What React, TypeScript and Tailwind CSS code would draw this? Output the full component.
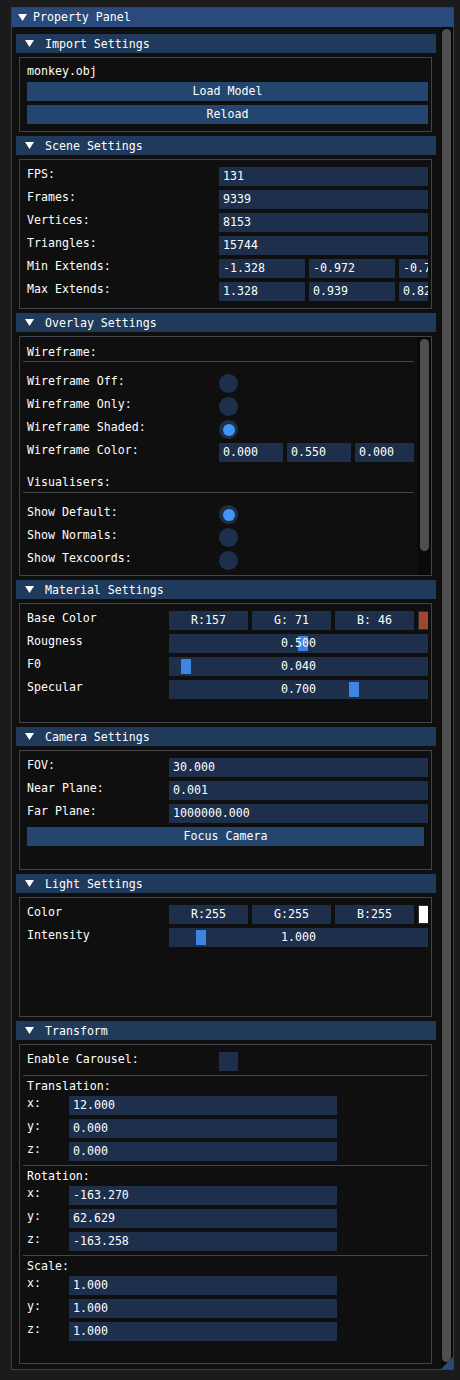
import React from "react";

// ImGui-like dark property panel

function Arrow({ className }: { className?: string }) {
  return (
    <svg width="9" height="7" viewBox="0 0 9 7" className={className}>
      <polygon points="0,0 9,0 4.5,7" fill="#ffffff" />
    </svg>
  );
}

function Header({ title }: { title: string }) {
  return (
    <div className="h-[19px] w-[420px] shrink-0 bg-[#1f3a5b] flex items-center">
      <Arrow className="ml-[9px] mr-[11px]" />
      <span className="pt-[2px]">{title}</span>
    </div>
  );
}

function Box({ className, children }: { className: string; children: React.ReactNode }) {
  return (
    <div className={"my-[4px] ml-[3px] w-[413px] shrink-0 border border-[#43434c] overflow-hidden " + className}>
      {children}
    </div>
  );
}

function Label({ className, children }: { className: string; children: React.ReactNode }) {
  return <div className={"shrink-0 pt-px whitespace-pre " + className}>{children}</div>;
}

function Field({ className, children }: { className?: string; children: React.ReactNode }) {
  return (
    <div className={"h-[19px] shrink-0 bg-[#1d2f4a] pl-[4px] pt-[3px] whitespace-pre overflow-hidden " + (className ?? "")}>
      {children}
    </div>
  );
}

function CenterField({ children }: { children: React.ReactNode }) {
  return (
    <div className="h-[19px] w-[79px] shrink-0 bg-[#1d2f4a] pt-[3px] text-center whitespace-pre">{children}</div>
  );
}

function Button({ className, children }: { className: string; children: React.ReactNode }) {
  return <div className={"h-[19px] shrink-0 bg-[#24456e] pt-[3px] text-center " + className}>{children}</div>;
}

function Radio({ on }: { on?: boolean }) {
  return (
    <div className="w-[19px] h-[19px] rounded-full bg-[#1d2f4a] flex items-center justify-center">
      {on && <div className="w-[12px] h-[12px] rounded-full bg-[#4296fa]" />}
    </div>
  );
}

function Slider({ grab, value }: { grab: string; value: string }) {
  return (
    <div className="relative h-[19px] w-[259px] bg-[#1d2f4a]">
      <div className={"absolute top-[2px] h-[15px] w-[10px] bg-[#3d85e0] " + grab} />
      <div className="relative pt-[3px] text-center">{value}</div>
    </div>
  );
}

function Sep({ className }: { className: string }) {
  return <div className={"h-px bg-[#43434c] -ml-[4px] " + className} />;
}

function Row({ className, children }: { className?: string; children: React.ReactNode }) {
  return <div className={"flex h-[19px] shrink-0 " + (className ?? "")}>{children}</div>;
}

export default function App() {
  return (
    <div className="min-h-[1380px] bg-[#1b1b1b] pt-[7px] pl-[11px] font-['DejaVu_Sans_Mono',monospace] text-[11.6px] leading-[13px] text-white">
      <div className="relative flex h-[1363px] w-[443px] flex-col border border-[#3d3d44] bg-[#0f0f0f]">
        <div className="flex h-[19px] shrink-0 items-center bg-[#294a7a]">
          <Arrow className="ml-[6px] mr-[6px]" />
          <span>Property Panel</span>
        </div>

        <div className="flex min-h-0 flex-1">
          <div className="flex w-[429px] flex-col overflow-hidden pl-[4px] pt-[7px]">
            {/* Import */}
            <Header title="Import Settings" />
            <Box className="h-[75px]">
              <div className="flex flex-col pl-[7px] pr-[3px] pt-[7px]">
                <div className="h-[13px]">monkey.obj</div>
                <Button className="mt-[4px]">Load Model</Button>
                <Button className="mt-[4px]">Reload</Button>
              </div>
            </Box>

            {/* Scene */}
            <Header title="Scene Settings" />
            <Box className="h-[150px]">
              <div className="flex flex-col gap-[4px] pl-[7px] pr-[3px] pt-[7px]">
                <Row>
                  <Label className="w-[192px]">FPS:</Label>
                  <Field className="w-[209px]">131</Field>
                </Row>
                <Row>
                  <Label className="w-[192px]">Frames:</Label>
                  <Field className="w-[209px]">9339</Field>
                </Row>
                <Row>
                  <Label className="w-[192px]">Vertices:</Label>
                  <Field className="w-[209px]">8153</Field>
                </Row>
                <Row>
                  <Label className="w-[192px]">Triangles:</Label>
                  <Field className="w-[209px]">15744</Field>
                </Row>
                <Row>
                  <Label className="w-[192px]">Min Extends:</Label>
                  <div className="flex w-[209px] gap-[4px] overflow-hidden">
                    <Field className="w-[86px]">-1.328</Field>
                    <Field className="w-[86px]">-0.972</Field>
                    <Field className="w-[86px]">-0.765</Field>
                  </div>
                </Row>
                <Row>
                  <Label className="w-[192px]">Max Extends:</Label>
                  <div className="flex w-[209px] gap-[4px] overflow-hidden">
                    <Field className="w-[86px]">1.328</Field>
                    <Field className="w-[86px]">0.939</Field>
                    <Field className="w-[86px]">0.828</Field>
                  </div>
                </Row>
              </div>
            </Box>

            {/* Overlay */}
            <Header title="Overlay Settings" />
            <Box className="h-[240px]">
              <div className="flex h-full">
                <div className="flex w-[397px] flex-col pl-[7px] pr-[3px] pt-[8px]">
                  <div className="h-[13px] pt-px">Wireframe:</div>
                  <Sep className="mt-[3px]" />
                  <div className="mt-[12px] flex flex-col gap-[4px]">
                    <Row>
                      <Label className="w-[192px]">Wireframe Off:</Label>
                      <Radio />
                    </Row>
                    <Row>
                      <Label className="w-[192px]">Wireframe Only:</Label>
                      <Radio />
                    </Row>
                    <Row>
                      <Label className="w-[192px]">Wireframe Shaded:</Label>
                      <Radio on />
                    </Row>
                    <Row>
                      <Label className="w-[192px]">Wireframe Color:</Label>
                      <div className="flex w-[195px] gap-[4px] overflow-hidden">
                        <Field className="w-[64px]">0.000</Field>
                        <Field className="w-[64px]">0.550</Field>
                        <Field className="w-[64px]">0.000</Field>
                      </div>
                    </Row>
                  </div>
                  <div className="mt-[13px] h-[13px] pt-px">Visualisers:</div>
                  <Sep className="mt-[4px]" />
                  <div className="mt-[12px] flex flex-col gap-[4px]">
                    <Row>
                      <Label className="w-[192px]">Show Default:</Label>
                      <Radio on />
                    </Row>
                    <Row>
                      <Label className="w-[192px]">Show Normals:</Label>
                      <Radio />
                    </Row>
                    <Row>
                      <Label className="w-[192px]">Show Texcoords:</Label>
                      <Radio />
                    </Row>
                  </div>
                </div>
                <div className="w-[14px] bg-[#0a0a0a] pt-[2px]">
                  <div className="ml-[3px] h-[212px] w-[9px] rounded-full bg-[#4f4f4f]" />
                </div>
              </div>
            </Box>

            {/* Material */}
            <Header title="Material Settings" />
            <Box className="h-[120px]">
              <div className="flex flex-col gap-[4px] pl-[7px] pr-[3px] pt-[7px]">
                <Row>
                  <Label className="w-[142px]">Base Color</Label>
                  <div className="flex w-[259px] gap-[4px] overflow-hidden">
                    <CenterField>R:157</CenterField>
                    <CenterField>G: 71</CenterField>
                    <CenterField>B: 46</CenterField>
                    <div className="h-[19px] w-[10px] shrink-0 border-y border-l border-[#2e2e33] bg-[#9d472e]" />
                  </div>
                </Row>
                <Row>
                  <Label className="w-[142px]">Rougness</Label>
                  <Slider grab="left-[129px]" value="0.500" />
                </Row>
                <Row>
                  <Label className="w-[142px]">F0</Label>
                  <Slider grab="left-[12px]" value="0.040" />
                </Row>
                <Row>
                  <Label className="w-[142px]">Specular</Label>
                  <Slider grab="left-[180px]" value="0.700" />
                </Row>
              </div>
            </Box>

            {/* Camera */}
            <Header title="Camera Settings" />
            <Box className="h-[120px]">
              <div className="flex flex-col gap-[4px] pl-[7px] pr-[3px] pt-[7px]">
                <Row>
                  <Label className="w-[142px]">FOV:</Label>
                  <Field className="w-[259px]">30.000</Field>
                </Row>
                <Row>
                  <Label className="w-[142px]">Near Plane:</Label>
                  <Field className="w-[259px]">0.001</Field>
                </Row>
                <Row>
                  <Label className="w-[142px]">Far Plane:</Label>
                  <Field className="w-[259px]">1000000.000</Field>
                </Row>
                <Button className="w-[397px]">Focus Camera</Button>
              </div>
            </Box>

            {/* Light */}
            <Header title="Light Settings" />
            <Box className="h-[120px]">
              <div className="flex flex-col gap-[4px] pl-[7px] pr-[3px] pt-[7px]">
                <Row>
                  <Label className="w-[142px]">Color</Label>
                  <div className="flex w-[259px] gap-[4px] overflow-hidden">
                    <CenterField>R:255</CenterField>
                    <CenterField>G:255</CenterField>
                    <CenterField>B:255</CenterField>
                    <div className="h-[19px] w-[10px] shrink-0 border-y border-l border-[#2e2e33] bg-white" />
                  </div>
                </Row>
                <Row>
                  <Label className="w-[142px]">Intensity</Label>
                  <Slider grab="left-[27px]" value="1.000" />
                </Row>
              </div>
            </Box>

            {/* Transform */}
            <Header title="Transform" />
            <Box className="h-[320px]">
              <div className="flex flex-col pl-[7px] pr-[3px] pt-[7px]">
                <Row>
                  <Label className="w-[192px]">Enable Carousel:</Label>
                  <div className="h-[19px] w-[19px] bg-[#1d2f4a]" />
                </Row>
                {[
                  { title: "Translation:", vals: ["12.000", "0.000", "0.000"] },
                  { title: "Rotation:", vals: ["-163.270", "62.629", "-163.258"] },
                  { title: "Scale:", vals: ["1.000", "1.000", "1.000"] },
                ].map((g) => (
                  <div key={g.title} className="flex flex-col">
                    <Sep className="mt-[4px]" />
                    <div className="mt-[3px] h-[13px] pt-px">{g.title}</div>
                    <div className="mt-[4px] flex flex-col gap-[4px]">
                      {["x:", "y:", "z:"].map((axis, i) => (
                        <Row key={axis}>
                          <Label className="w-[42px]">{axis}</Label>
                          <Field className="w-[268px]">{g.vals[i]}</Field>
                        </Row>
                      ))}
                    </div>
                  </div>
                ))}
              </div>
            </Box>
          </div>

          {/* main scrollbar */}
          <div className="w-[12px] bg-[#0a0a0a] pt-[2px]">
            <div className="ml-[1px] h-[1333px] w-[9px] rounded-full bg-[#4f4f4f]" />
          </div>
        </div>

        {/* resize grip */}
        <svg width="12" height="12" viewBox="0 0 12 12" className="absolute bottom-0 right-0">
          <polygon points="12,0 12,12 0,12" fill="#2b4a73" />
        </svg>
      </div>
    </div>
  );
}
